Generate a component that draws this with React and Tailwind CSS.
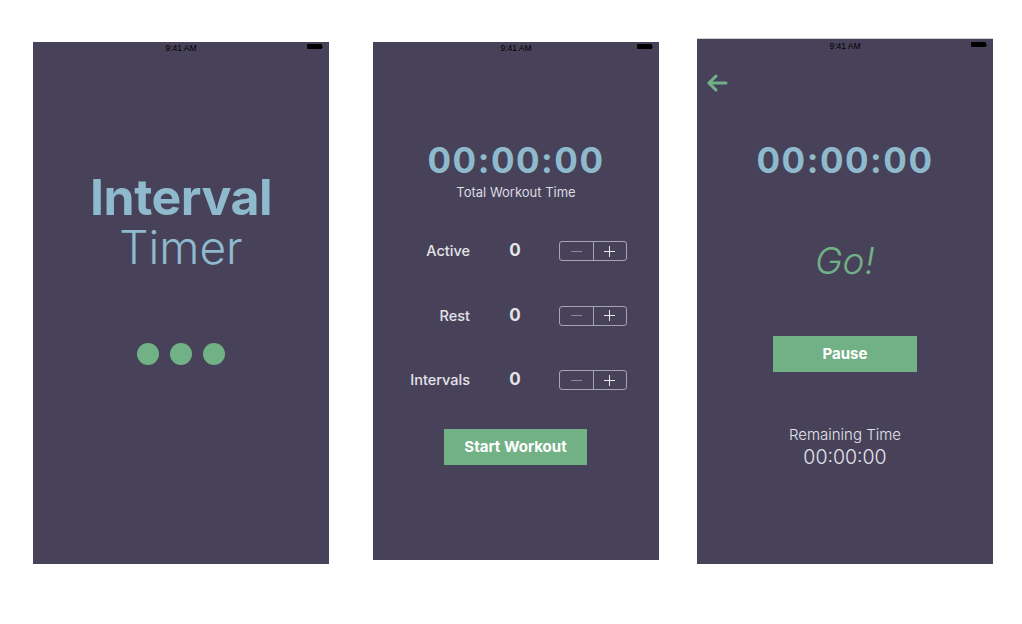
import React from "react";

const FONT = { fontFamily: "Inter, 'Noto Sans', sans-serif" };

function StatusBar() {
  return (
    <div className="relative h-[12px] w-full">
      <div className="flex h-full items-center justify-center pt-[1px] text-[8.5px] leading-none text-black" style={{ fontFamily: "'Liberation Sans', Arial, sans-serif" }}>
        9:41 AM
      </div>
      <div className="absolute right-[6px] top-[2px] flex items-center">
        <div className="h-[5px] w-[15px] rounded-[1px] bg-black" />
        <div className="h-[2px] w-[1px] bg-black/50" />
      </div>
    </div>
  );
}

function Stepper() {
  return (
    <div className="flex h-[20px] w-[68px] rounded-[3px] border border-[#a7a5b4]">
      <div className="flex flex-1 items-center justify-center border-r border-[#a7a5b4]">
        <div className="h-[1px] w-[11px] bg-[#8a879a]" />
      </div>
      <div className="relative flex flex-1 items-center justify-center">
        <div className="h-[1px] w-[11px] bg-[#e6e6ee]" />
        <div className="absolute h-[11px] w-[1px] bg-[#e6e6ee]" />
      </div>
    </div>
  );
}

function Row({ label }) {
  return (
    <div className="flex h-[24px] items-center">
      <div className="w-[98px] pr-[1px] text-right text-[14.5px] font-medium text-[#e4e3ea]">{label}</div>
      <div className="w-[88px] text-center text-[17px] font-bold text-[#e4e3ea]">0</div>
      <Stepper />
    </div>
  );
}

export default function App() {
  return (
    <div className="flex h-[624px] w-[1022px] items-start bg-white pl-[33px]" style={FONT}>
      {/* Screen 1 */}
      <div className="mt-[42px] flex h-[522px] w-[296px] flex-col items-center bg-[#474259]">
        <StatusBar />
        <div className="mt-[120px] text-[50px] font-bold leading-[46px] tracking-[-0.5px] text-[#8fbacd]">Interval</div>
        <div className="mt-[6px] text-[46px] font-light leading-[42px] text-[#8fbacd]">Timer</div>
        <div className="mt-[75px] flex gap-[11px]">
          <div className="h-[22px] w-[22px] rounded-full bg-[#72b086]" />
          <div className="h-[22px] w-[22px] rounded-full bg-[#72b086]" />
          <div className="h-[22px] w-[22px] rounded-full bg-[#72b086]" />
        </div>
      </div>

      {/* Screen 2 */}
      <div className="ml-[44px] mt-[42px] flex h-[518px] w-[286px] flex-col bg-[#474259]">
        <StatusBar />
        <div className="mt-[86px] text-center text-[35px] font-bold leading-[40px] tracking-[1.5px] text-[#8fbacd]">00:00:00</div>
        <div className="mt-[4px] text-center text-[13px] leading-[16px] text-[#dcdbe3]">Total Workout Time</div>
        <div className="mt-[39px] flex flex-col gap-[40.5px]">
          <Row label="Active" />
          <Row label="Rest" />
          <Row label="Intervals" />
        </div>
        <div className="ml-[71px] mt-[37px] flex h-[36px] w-[143px] items-center justify-center bg-[#72b086] text-[15px] font-bold text-white">
          Start Workout
        </div>
      </div>

      {/* Screen 3 */}
      <div className="ml-[38px] mt-[38px] flex h-[526px] w-[296px] flex-col border-t border-[#cfcfd4] bg-[#474259]">
        <div className="pt-[1px]">
          <StatusBar />
        </div>
        <div className="ml-[9px] mt-[21px] h-[20px] w-[22px]">
          <svg width="22" height="20" viewBox="0 0 22 20" fill="none" stroke="#72b086" strokeWidth="3" strokeLinecap="round" strokeLinejoin="round">
            <path d="M20 10H3" />
            <path d="M10 3L3 10L10 17" />
          </svg>
        </div>
        <div className="mt-[47px] text-center text-[35px] font-bold leading-[40px] tracking-[1.5px] text-[#8fbacd]">00:00:00</div>
        <div className="mt-[59px] text-center text-[37px] font-light italic leading-[44px] text-[#72b086]">Go!</div>
        <div className="ml-[76px] mt-[53px] flex h-[36px] w-[144px] items-center justify-center bg-[#72b086] text-[15px] font-bold text-white">
          Pause
        </div>
        <div className="mt-[53px] text-center text-[15px] font-light leading-[20px] text-[#e4e3ea]">Remaining Time</div>
        <div className="mt-[1px] text-center text-[19.5px] font-light leading-[22px] text-[#e4e3ea]">00:00:00</div>
      </div>
    </div>
  );
}
